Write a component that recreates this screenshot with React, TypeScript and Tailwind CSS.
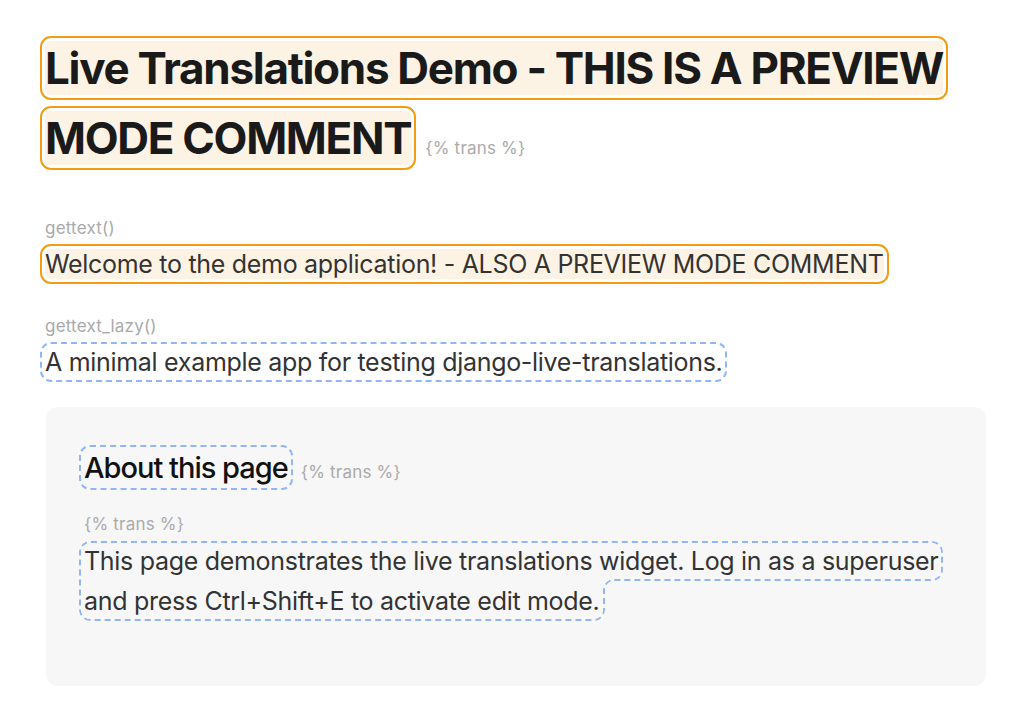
export default function App() {
  return (
    <div className="min-h-screen bg-white px-[45px] pt-[33px] font-['Inter',sans-serif] leading-[1.6] text-[#333]">
      <h1 className="text-[44px] font-bold tracking-[-1.3px] text-[#1a1a1a]">
        <span className="rounded-md bg-[#fdf3e4] outline-2 outline-offset-[3px] outline-[#f39c12]">
          Live Translations Demo - THIS IS A PREVIEW MODE COMMENT
        </span>
        <span className="ml-[14px] text-[17px] font-normal tracking-[0.2px] text-[#aaa]">{'{% trans %}'}</span>
      </h1>

      <div className="mt-[41px] text-[17px] tracking-[0.2px] text-[#aaa]">gettext()</div>
      <p className="mt-[2px] text-[25px] tracking-[-0.3px]">
        <span className="rounded-md bg-[#fdf3e4] outline-2 outline-offset-[3px] outline-[#f39c12]">
          Welcome to the demo application! - ALSO A PREVIEW MODE COMMENT
        </span>
      </p>

      <div className="mt-[29px] text-[17px] tracking-[0.2px] text-[#aaa]">gettext_lazy()</div>
      <p className="mt-[2px] text-[25px] tracking-[-0.3px]">
        <span className="rounded-md outline-2 outline-dashed outline-offset-[3px] outline-[#93b5f7]">
          A minimal example app for testing django-live-translations.
        </span>
      </p>

      <div className="mt-[25px] mr-[-3px] ml-px rounded-xl bg-[#f7f7f7] px-[38px] pt-[38px] pb-[65px]">
        <h2 className="text-[29px] font-medium tracking-[-1px] text-[#111]">
          <span className="rounded-md outline-2 outline-dashed outline-offset-[3px] outline-[#93b5f7]">About this page</span>
          <span className="ml-[13px] text-[17px] font-normal tracking-[0.2px] text-[#aaa]">{'{% trans %}'}</span>
        </h2>
        <div className="mt-[19px] text-[17px] tracking-[0.2px] text-[#aaa]">{'{% trans %}'}</div>
        <p className="mt-[3px] text-[25px] tracking-[-0.3px]">
          <span className="rounded-md outline-2 outline-dashed outline-offset-[3px] outline-[#93b5f7]">
            This page demonstrates the live translations widget. Log in as a superuser and press Ctrl+Shift+E to activate edit mode.
          </span>
        </p>
      </div>
    </div>
  );
}
